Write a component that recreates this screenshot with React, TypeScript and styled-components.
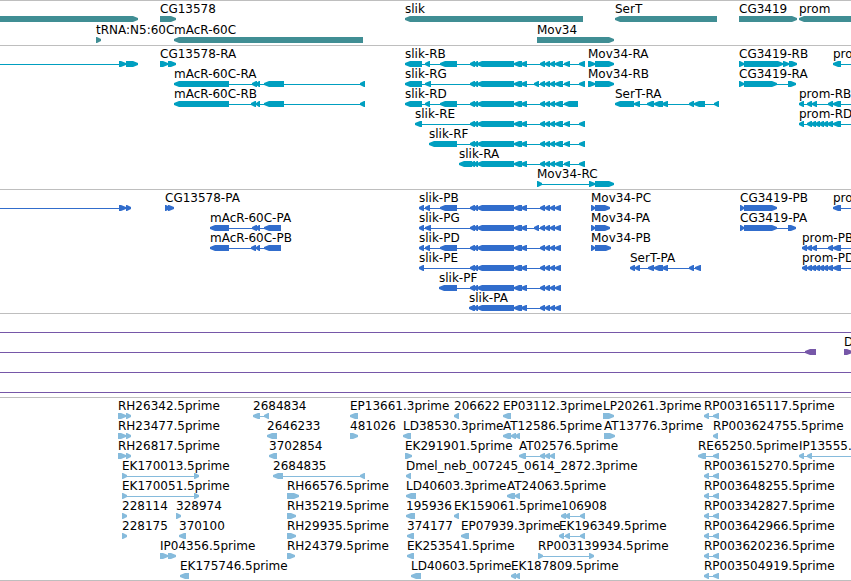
import React from "react";
import styled, { createGlobalStyle } from "styled-components";

const GlobalStyle = createGlobalStyle`
  body {
    margin: 0;
    background: #ffffff;
    color: #000000;
    font: 12px/13px "DejaVu Sans", Verdana, sans-serif;
  }
`;

type Span = [number, number];
type Direction = "left" | "right";

interface FeatureData {
  label: string;
  dir: Direction;
  exons: Span[];
  from?: number;
  to?: number;
}

interface TrackData {
  name: string;
  color: string;
  laneHeight: number;
  padBottom: number;
  glyphHeight: number;
  lanes: FeatureData[][];
}

const Browser = styled.main`
  width: 100%;
  overflow: hidden;
  border-bottom: 1px solid #bebebe;
`;

const TrackPanel = styled.section<{ $padBottom: number; $color: string }>`
  border-top: 1px solid #bebebe;
  padding: 2px 0 ${(p) => p.$padBottom}px;
  color: ${(p) => p.$color};
`;

const Lane = styled.div<{ $height: number }>`
  position: relative;
  height: ${(p) => p.$height}px;
`;

const FeatureBox = styled.div`
  position: absolute;
  top: 0;
  display: flex;
  flex-direction: column;
`;

const Label = styled.span`
  height: 13px;
  color: #000000;
  white-space: nowrap;
`;

const Glyph = styled.svg`
  display: block;
  overflow: visible;
  fill: currentColor;
`;

const HEAD = 5;
const EDGE = 2400;

// An exon is a bar whose leading end tapers to a blunt tip.
function exonPoints(start: number, end: number, dir: Direction, h: number) {
  const head = Math.min(HEAD, end - start - 1);
  const upper = h / 2 - 1;
  const lower = h / 2 + 1;
  const [back, tip, neck] = dir === "right" ? [start, end, end - head] : [end, start, start + head];
  return `${back},0 ${neck},0 ${tip},${upper} ${tip},${lower} ${neck},${h} ${back},${h}`;
}

function Feature({ data, height }: { data: FeatureData; height: number }) {
  const starts = data.exons.map((e) => e[0]);
  const ends = data.exons.map((e) => e[1]);
  const start = data.from ?? Math.min(...starts);
  const end = data.to ?? Math.max(...ends);
  return (
    <FeatureBox style={{ left: start }}>
      <Label>{data.label}</Label>
      <Glyph width={end - start} height={height} aria-hidden="true">
        <rect x={0} y={3} width={end - start} height={1} />
        {data.exons.map(([a, b], i) => (
          <polygon key={i} points={exonPoints(a - start, b - start, data.dir, height)} />
        ))}
      </Glyph>
    </FeatureBox>
  );
}

const left = (label: string, exons: Span[], to?: number): FeatureData => ({ label, dir: "left", exons, to });
const right = (label: string, exons: Span[], from?: number): FeatureData => ({ label, dir: "right", exons, from });
const intron = (): FeatureData => ({ label: "", dir: "left", exons: [], from: 0, to: EDGE });

const slikCore: Span[] = [[470, 475], [474, 478], [477, 514], [514, 522], [521, 527]];
const slikMid: Span[] = [[540, 545], [545, 550], [550, 555]];
const slikTail: Span[] = [...slikCore, ...slikMid, [555, 563], [564, 570], [579, 585]];
const slikCoding: Span[] = [...slikCore, ...slikMid, [555, 561]];
const acrSmall: Span[] = [[252, 257], [256, 260]];
const acrSmallB: Span[] = [[251, 256], [256, 260]];
const promB: Span[] = [[807, 812], [812, 817], [828, 833], [833, 841]];
const promD: Span[] = [[807, 812], [811, 816], [815, 820], [819, 824], [823, 828], [827, 833], [833, 841]];
const rh: Span[] = [[118, 126], [126, 131]];
const rp: Span[] = [[704, 709], [713, 719]];
const ek: Span[] = [[122, 127], [194, 199]];

const tracks: TrackData[] = [
  {
    name: "Genes",
    color: "#408e94",
    laneHeight: 21,
    padBottom: 0,
    glyphHeight: 6,
    lanes: [
      [
        right("", [[0, 138]]),
        right("CG13578", [[160, 176]]),
        left("slik", [[405, 583]]),
        left("SerT", [[615, 717]]),
        right("CG3419", [[739, 797]]),
        left("prom", [[799, EDGE]]),
      ],
      [right("tRNA:N5:60C", [[96, 101]]), left("mAcR-60C", [[174, 363]]), right("Mov34", [[537, 614]])],
    ],
  },
  {
    name: "Transcripts",
    color: "#009fc0",
    laneHeight: 20,
    padBottom: 1,
    glyphHeight: 6,
    lanes: [
      [
        right("", [[119, 126], [126, 138]], 0),
        right("CG13578-RA", [[160, 168], [168, 176]]),
        left("slik-RB", [[405, 422], [425, 430], [440, 457], ...slikTail]),
        right("Mov34-RA", [[588, 595], [595, 614]]),
        right("CG3419-RB", [[739, 744], [744, 783], [783, 789], [789, 797]]),
        left("prom-RC", [[833, 841]], EDGE),
      ],
      [
        left("mAcR-60C-RA", [[174, 229], ...acrSmall, [264, 284], [360, 365]]),
        left("slik-RG", [[405, 422], [425, 431], [534, 539], ...slikTail]),
        right("Mov34-RB", [[588, 595], [595, 614]]),
        right("CG3419-RA", [[739, 744], [744, 777], [788, 796]]),
      ],
      [
        left("mAcR-60C-RB", [[174, 229], ...acrSmallB, [264, 284], [360, 365]]),
        left("slik-RD", [[405, 422], [425, 430], [440, 457], ...slikCore, ...slikMid, [555, 563], [564, 578]]),
        left("SerT-RA", [[615, 634], [634, 640], [647, 654], [654, 663], [662, 668], [689, 694], [694, 705], [714, 719]]),
        left("prom-RB", [[799, 804], ...promB], EDGE),
      ],
      [left("slik-RE", [[415, 422], ...slikTail]), left("prom-RD", [[799, 804], ...promD], EDGE)],
      [left("slik-RF", [[429, 457], ...slikTail])],
      [left("slik-RA", [[459, 472], ...slikTail])],
      [right("Mov34-RC", [[537, 542], [589, 595], [595, 614]])],
    ],
  },
  {
    name: "Coding sequences",
    color: "#316dcc",
    laneHeight: 20,
    padBottom: 1,
    glyphHeight: 6,
    lanes: [
      [
        right("", [[119, 126], [126, 131]], 0),
        right("CG13578-PA", [[165, 170], [168, 174]]),
        left("slik-PB", [[419, 424], [425, 430], [440, 457], ...slikCoding]),
        right("Mov34-PC", [[591, 595], [595, 610]]),
        right("CG3419-PB", [[740, 744], [744, 777]]),
        left("prom-PC", [[833, 841]], EDGE),
      ],
      [
        left("mAcR-60C-PA", [[210, 229], ...acrSmall, [264, 281]]),
        left("slik-PG", [[419, 424], [425, 431], [534, 539], ...slikCoding]),
        right("Mov34-PA", [[591, 595], [595, 610]]),
        right("CG3419-PA", [[740, 744], [744, 777], [788, 796]]),
      ],
      [
        left("mAcR-60C-PB", [[210, 229], ...acrSmallB, [264, 281]]),
        left("slik-PD", [[419, 424], [425, 430], [440, 457], ...slikCoding]),
        right("Mov34-PB", [[591, 595], [595, 611]]),
        left("prom-PB", [[802, 807], ...promB], EDGE),
      ],
      [
        left("slik-PE", [[419, 424], ...slikCoding]),
        left("SerT-PA", [[630, 635], [635, 640], [648, 654], [654, 663], [662, 668], [689, 694], [695, 701]]),
        left("prom-PD", [[802, 807], ...promD], EDGE),
      ],
      [left("slik-PF", [[439, 457], ...slikCoding])],
      [left("slik-PA", [[469, 475], ...slikCoding])],
    ],
  },
  {
    name: "Aligned cDNA",
    color: "#7657a8",
    laneHeight: 20,
    padBottom: 1,
    glyphHeight: 6,
    lanes: [
      [intron()],
      [
        { label: "", dir: "left", exons: [[805, 816]], from: 0 },
        { label: "Dmel", dir: "right", exons: [[844, 852]], to: EDGE },
      ],
      [intron()],
      [intron()],
    ],
  },
  {
    name: "ESTs",
    color: "#86bbdc",
    laneHeight: 20,
    padBottom: 0,
    glyphHeight: 6,
    lanes: [
      [
        right("RH26342.5prime", rh),
        left("2684834", [[253, 260], [264, 269]]),
        left("EP13661.3prime", [[350, 358]]),
        left("206622", [[454, 459]]),
        left("EP03112.3prime", [[503, 511]]),
        right("LP20261.3prime", [[603, 614]]),
        left("RP003165117.5prime", rp),
      ],
      [
        right("RH23477.5prime", rh),
        left("2646233", [[267, 277]]),
        right("481026", [[350, 358]]),
        left("LD38530.3prime", [[403, 411]]),
        left("AT12586.5prime", [[503, 511], [511, 516], [515, 520]]),
        right("AT13776.3prime", [[604, 615]]),
        left("RP003624755.5prime", [[713, 718]]),
      ],
      [
        right("RH26817.5prime", rh),
        left("3702854", [[269, 277]]),
        right("EK291901.5prime", [[405, 412]]),
        left("AT02576.5prime", [[519, 526], [540, 545], [545, 550], [550, 555]]),
        left("RE65250.5prime", [[698, 706], [713, 719]]),
        left("IP13555.5prime", [[799, 804], [807, 812]], EDGE),
      ],
      [
        right("EK170013.5prime", ek),
        left("2684835", [[273, 283], [360, 365]]),
        left("Dmel_neb_007245_0614_2872.3prime", [[406, 411]]),
        left("RP003615270.5prime", rp),
      ],
      [
        right("EK170051.5prime", ek),
        right("RH66576.5prime", [[287, 299]]),
        left("LD40603.3prime", [[406, 416]]),
        left("AT24063.5prime", [[507, 515], [515, 520]]),
        left("RP003648255.5prime", rp),
      ],
      [
        right("228114", [[122, 127]]),
        right("328974", [[176, 181]]),
        right("RH35219.5prime", [[287, 296]]),
        left("195936", [[406, 415]]),
        left("EK159061.5prime", [[454, 459]]),
        left("106908", [[561, 566], [565, 570], [580, 585]]),
        left("RP003342827.5prime", rp),
      ],
      [
        right("228175", [[122, 127]]),
        left("370100", [[179, 186]]),
        right("RH29935.5prime", [[287, 296]]),
        left("374177", [[407, 414]]),
        left("EP07939.3prime", [[461, 469]]),
        left("EK196349.5prime", [[559, 564], [565, 570], [580, 585]]),
        left("RP003642966.5prime", rp),
      ],
      [
        right("IP04356.5prime", [[160, 168], [168, 176]]),
        right("RH24379.5prime", [[287, 295]]),
        left("EK253541.5prime", [[407, 414]]),
        right("RP003139934.5prime", [[538, 543], [589, 594]]),
        left("RP003620236.5prime", rp),
      ],
      [
        left("EK175746.5prime", [[180, 189]]),
        left("LD40603.5prime", [[411, 421]]),
        left("EK187809.5prime", [[511, 516], [515, 520]]),
        left("RP003504919.5prime", rp),
      ],
    ],
  },
];

export default function App() {
  return (
    <>
      <GlobalStyle />
      <Browser>
        {tracks.map((track) => (
          <TrackPanel key={track.name} aria-label={track.name} $padBottom={track.padBottom} $color={track.color}>
            {track.lanes.map((lane, i) => (
              <Lane key={i} $height={track.laneHeight}>
                {lane.map((feature, j) => (
                  <Feature key={j} data={feature} height={track.glyphHeight} />
                ))}
              </Lane>
            ))}
          </TrackPanel>
        ))}
      </Browser>
    </>
  );
}
